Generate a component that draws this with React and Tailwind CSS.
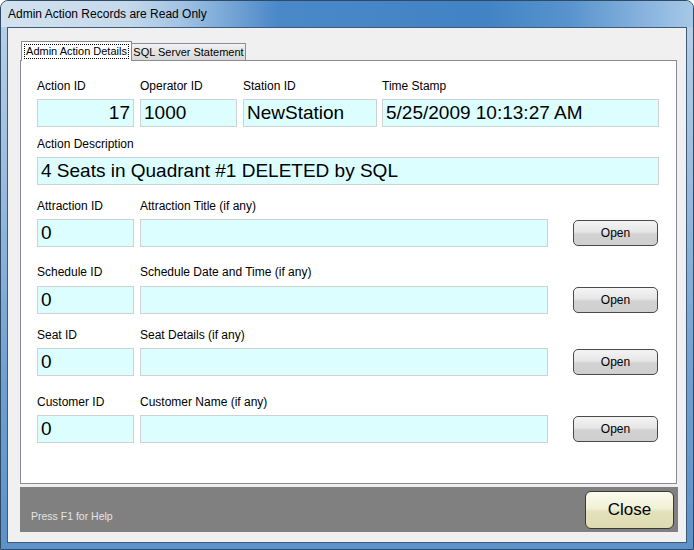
import React from 'react';

const font = { fontFamily: '"Liberation Sans", Arial, sans-serif' };

const Box = ({ value = '', width, align = 'left' }) => (
  <div
    className={`h-[28px] border border-[#cdd2d4] bg-[#dcfeff] flex items-center px-[3px] text-[19px] text-black whitespace-nowrap ${align === 'right' ? 'justify-end' : ''}`}
    style={{ width }}
  >
    {value}
  </div>
);

const Label = ({ children }) => (
  <div className="text-[12px] leading-[14px] text-black whitespace-nowrap">{children}</div>
);

const OpenButton = () => (
  <button className="w-[85px] h-[26px] rounded-[5px] border border-[#4a4a4a] bg-[linear-gradient(#f4f4f4,#e6e6e6_45%,#d2d2d2_55%,#cfcfcf)] text-[12px] text-black flex items-center justify-center">
    Open
  </button>
);

const LinkedRow = ({ idLabel, nameLabel, top, gap = 6 }) => (
  <div style={{ marginTop: top }}>
    <div className="flex">
      <div className="w-[103px]"><Label>{idLabel}</Label></div>
      <Label>{nameLabel}</Label>
    </div>
    <div className="flex items-center" style={{ marginTop: gap }}>
      <Box value="0" width={97} />
      <div className="ml-[6px]"><Box width={408} /></div>
      <div className="ml-[25px]"><OpenButton /></div>
    </div>
  </div>
);

export default function App() {
  return (
    <div
      className="w-[694px] h-[550px] flex flex-col rounded-t-[8px] border border-[#2f4a64] bg-[linear-gradient(180deg,#bcd2e8_0%,#9dbddf_30%,#6f9fd0_70%,#5d92c8_100%)] overflow-hidden"
      style={font}
    >
      {/* Title bar */}
      <div className="h-[26px] flex items-center px-[7px] bg-[linear-gradient(90deg,#d3e2ef_0%,#c5d9ec_18%,#a2c3e4_26%,#4a88c8_40%,#4283c5_70%,#5893cd_82%,#a6c8e8_100%)]">
        <span className="text-[12px] text-black">Admin Action Records are Read Only</span>
      </div>

      {/* Client area */}
      <div className="mx-[6px] mb-[6px] flex-1 border border-[#3c5b78] bg-[#f0f0f0] pl-[12px] pr-[8px] pt-[13px] pb-[10px] flex flex-col">
        {/* Tabs */}
        <div className="flex items-start h-[19px] pl-[1px]">
          <div className="relative z-10 h-[20px] w-[111px] border border-b-0 border-[#898c95] bg-white flex items-center justify-center">
            <span className="text-[11px] leading-[13px] px-[1px] border border-dotted border-black whitespace-nowrap">Admin Action Details</span>
          </div>
          <div className="mt-[2px] h-[17px] w-[114px] border border-b-0 border-l-0 border-[#898c95] bg-[linear-gradient(#f2f2f2,#e3e3e3_50%,#d9d9d9)] flex items-center justify-center">
            <span className="text-[11px] whitespace-nowrap">SQL Server Statement</span>
          </div>
        </div>

        {/* Panel */}
        <div className="h-[424px] mr-[1px] border border-[#898c95] bg-white pl-[16px]">
          {/* Row 1 */}
          <div className="mt-[18px] flex">
            <div className="w-[103px]"><Label>Action ID</Label></div>
            <div className="w-[103px]"><Label>Operator ID</Label></div>
            <div className="w-[139px]"><Label>Station ID</Label></div>
            <Label>Time Stamp</Label>
          </div>
          <div className="mt-[6px] flex">
            <Box value="17" width={97} align="right" />
            <div className="ml-[6px]"><Box value="1000" width={97} /></div>
            <div className="ml-[6px]"><Box value="NewStation" width={134} /></div>
            <div className="ml-[5px]"><Box value="5/25/2009 10:13:27 AM" width={277} /></div>
          </div>

          {/* Row 2 */}
          <div className="mt-[10px]"><Label>Action Description</Label></div>
          <div className="mt-[6px]">
            <Box value="4 Seats in Quadrant #1 DELETED by SQL" width={622} />
          </div>

          <LinkedRow idLabel="Attraction ID" nameLabel="Attraction Title (if any)" top={14} />
          <LinkedRow idLabel="Schedule ID" nameLabel="Schedule Date and Time (if any)" top={18} gap={7} />
          <LinkedRow idLabel="Seat ID" nameLabel="Seat Details (if any)" top={14} />
          <LinkedRow idLabel="Customer ID" nameLabel="Customer Name (if any)" top={19} />
        </div>

        {/* Footer */}
        <div className="mt-[3px] h-[45px] bg-[#808080] flex items-end justify-between pl-[11px] pr-[4px] pb-[3px]">
          <span className="text-[10.5px] text-[#e4e4e4] mb-[4px]">Press F1 for Help</span>
          <button className="w-[89px] h-[38px] rounded-[6px] border border-[#3a3a3a] bg-[linear-gradient(#fbfbee,#f1f0d8_45%,#e4e2bd_55%,#dedbb0)] text-[17px] text-black flex items-center justify-center">
            Close
          </button>
        </div>
      </div>
    </div>
  );
}
